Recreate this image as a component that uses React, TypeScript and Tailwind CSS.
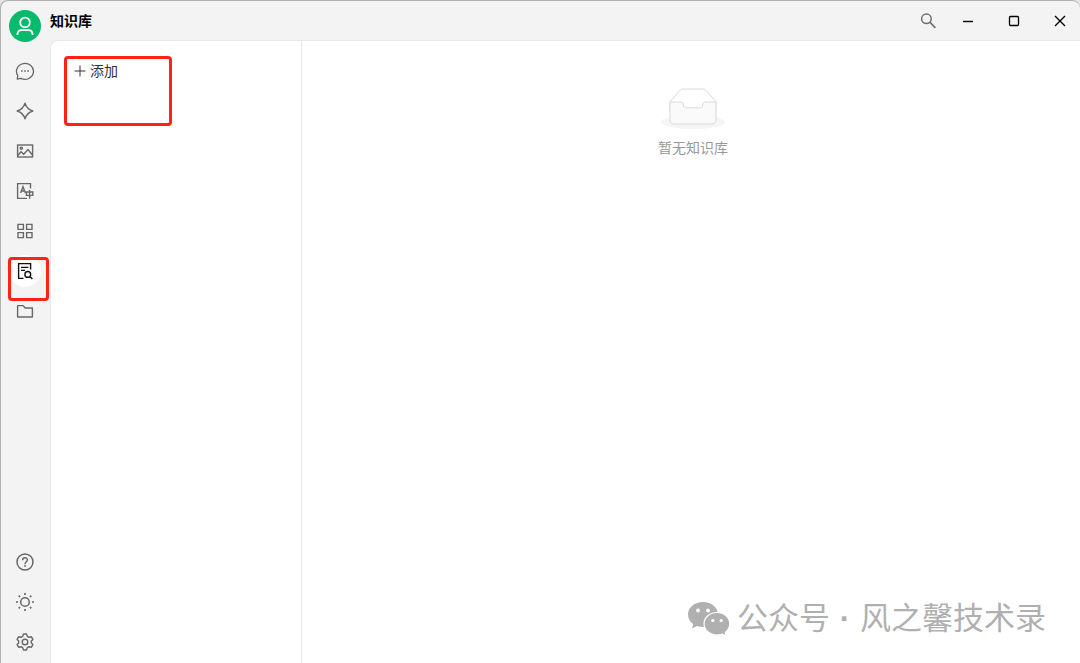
import type { ReactNode } from 'react';

type NavItem = { label: string; icon: ReactNode; active?: boolean };

const Glyph = ({ children }: { children: ReactNode }) => (
  <svg width="20" height="20" viewBox="0 0 20 20" fill="none" stroke="currentColor" strokeWidth="1.4" aria-hidden="true">
    {children}
  </svg>
);

const topItems: NavItem[] = [
  {
    label: '助手',
    icon: (
      <Glyph>
        <path d="M2.2 18 L2.8 14.6 A8.5 8 0 1 1 6 17.4 Z" strokeLinejoin="round" strokeWidth="1.3" />
        <path d="M6.1 10h1.6M9.2 10h1.6M12.3 10h1.6" strokeWidth="1.6" />
      </Glyph>
    ),
  },
  {
    label: '智能体',
    icon: (
      <Glyph>
        <path d="M10 2.2 C11.2 6 14 8.8 17.8 10 C14 11.2 11.2 14 10 17.8 C8.8 14 6 11.2 2.2 10 C6 8.8 8.8 6 10 2.2Z" strokeLinejoin="round" />
      </Glyph>
    ),
  },
  {
    label: '绘画',
    icon: (
      <Glyph>
        <rect x="2.6" y="4" width="15" height="12" />
        <circle cx="6.3" cy="7.3" r="1.1" />
        <path d="M2.8 14.5 L6 10.8 L8.7 13.2 L13 8.6 L17.4 14" />
      </Glyph>
    ),
  },
  {
    label: '翻译',
    icon: (
      <Glyph>
        <path d="M15.5 7.5 V2.6 H2.6 V17.4 H12" />
        <path d="M5.6 12 L8 5.8 L10.4 12 M6.6 10 H9.6" />
        <path d="M11.4 11 H17.8 V14.4 H11.4 Z M14.6 9 V17.8" />
      </Glyph>
    ),
  },
  {
    label: '小程序',
    icon: (
      <Glyph>
        <path d="M3 3.4h5.4v5H3zM11.6 3.4H17v5h-5.4zM3 11.6h5.4v5H3zM11.6 11.6H17v5h-5.4z" />
      </Glyph>
    ),
  },
  {
    label: '知识库',
    active: true,
    icon: (
      <Glyph>
        <path d="M8.5 17.4 H3.6 V2.6 H15.6 V8.5" />
        <path d="M6 6.4h7.4M6 9.4h4" />
        <circle cx="12.8" cy="13.4" r="2.9" />
        <path d="M14.9 15.5l2.5 2.5" />
      </Glyph>
    ),
  },
  {
    label: '文件',
    icon: (
      <Glyph>
        <path d="M2.6 4.6 H8.2 L10.2 7 H17.4 V16 H2.6 Z" strokeLinejoin="round" />
      </Glyph>
    ),
  },
];

const bottomItems: NavItem[] = [
  {
    label: '帮助',
    icon: (
      <Glyph>
        <circle cx="10" cy="10" r="8" strokeWidth="1.5" />
        <path d="M7.6 8.2 C7.6 5 12.4 5 12.4 8 C12.4 9.8 10 9.9 10 12.2" />
        <circle cx="10" cy="14" r="0.9" fill="currentColor" stroke="none" />
      </Glyph>
    ),
  },
  {
    label: '主题',
    icon: (
      <Glyph>
        <circle cx="10" cy="10" r="4.3" strokeWidth="1.5" />
        <path
          d="M10 1v2M10 17v2M1 10h2M17 10h2M3.7 3.7l1.3 1.3M15 15l1.3 1.3M16.3 3.7L15 5M5 15l-1.3 1.3"
          strokeWidth="1.7"
        />
      </Glyph>
    ),
  },
  {
    label: '设置',
    icon: (
      <Glyph>
        <path
          d="M8.5 2h3l.8 2.300 1.700 1 2.400-.5 1.500 2.600-1.600 1.600v2l1.600 1.600-1.500 2.600-2.400-.5-1.700 1-.8 2.300h-3l-.8-2.300-1.700-1-2.400.5-1.500-2.600L3.700 11V9L2.100 7.400l1.500-2.600 2.400.5 1.700-1z"
          strokeLinejoin="round"
        />
        <circle cx="10" cy="10" r="2.8" />
      </Glyph>
    ),
  },
];

const NavList = ({ items }: { items: NavItem[] }) => (
  <ul className="flex flex-col gap-2">
    {items.map((item) => (
      <li key={item.label} className="relative">
        <button
          type="button"
          aria-label={item.label}
          className={
            item.active
              ? 'flex size-8 items-center justify-center rounded-full bg-white text-[#111111]'
              : 'flex size-8 items-center justify-center rounded-full text-[#686868]'
          }
        >
          {item.icon}
        </button>
        {item.active && (
          <span className="pointer-events-none absolute top-0.5 -left-px h-11 w-[41px] rounded-sm border-3 border-[#ff2216]" />
        )}
      </li>
    ))}
  </ul>
);

const Sidebar = () => (
  <aside className="flex w-12 shrink-0 flex-col items-center pt-[9px] pb-[5px]">
    <button type="button" aria-label="用户" className="mb-[13px] flex size-8 items-center justify-center rounded-full bg-[#08ba6c] text-white">
      <svg width="20" height="20" viewBox="0 0 20 20" fill="none" stroke="currentColor" strokeWidth="1.8" aria-hidden="true">
        <circle cx="10" cy="6.4" r="4.8" />
        <path d="M2.4 19 C2.4 15.4 4 14.2 6.4 14.2 H13.6 C16 14.2 17.6 15.4 17.6 19" />
      </svg>
    </button>
    <nav className="flex flex-1 flex-col justify-between" aria-label="主导航">
      <NavList items={topItems} />
      <NavList items={bottomItems} />
    </nav>
  </aside>
);

const TitleBar = () => (
  <header className="flex h-[39px] shrink-0 items-center justify-between">
    <h1 className="text-sm font-bold text-black">知识库</h1>
    <div className="flex items-center">
      <button type="button" aria-label="搜索" className="flex h-8 w-10 items-center justify-center text-[#707070]">
        <svg width="16" height="16" viewBox="0 0 16 16" fill="none" stroke="currentColor" strokeWidth="1.5" aria-hidden="true">
          <circle cx="6.4" cy="5.8" r="4.8" />
          <path d="M9.8 9.2l5.600 5.600" strokeWidth="1.7" />
        </svg>
      </button>
      <div className="flex gap-1.5 text-black">
        <button type="button" aria-label="最小化" className="flex h-8 w-10 items-center justify-center">
          <svg width="12" height="12" viewBox="0 0 12 12" stroke="currentColor" strokeWidth="1.4" aria-hidden="true">
            <path d="M1 6.5h10" />
          </svg>
        </button>
        <button type="button" aria-label="最大化" className="flex h-8 w-10 items-center justify-center">
          <svg width="12" height="12" viewBox="0 0 12 12" fill="none" stroke="currentColor" strokeWidth="1.3" aria-hidden="true">
            <rect x="1.5" y="1.5" width="9" height="9" rx="1" />
          </svg>
        </button>
        <button type="button" aria-label="关闭" className="flex h-8 w-10 items-center justify-center">
          <svg width="12" height="12" viewBox="0 0 12 12" stroke="currentColor" strokeWidth="1.4" aria-hidden="true">
            <path d="M1 1l10 10M11 1L1 11" />
          </svg>
        </button>
      </div>
    </div>
  </header>
);

const EmptyState = () => (
  <div className="flex flex-col items-center gap-[9px]">
    <svg width="64" height="41" viewBox="0 0 64 41" aria-hidden="true">
      <g transform="translate(0 1)" fillRule="evenodd">
        <ellipse cx="32" cy="33" rx="32" ry="7" fill="#f5f5f5" />
        <g stroke="#d9d9d9">
          <path
            fill="#ffffff"
            d="M55 12.76L44.854 1.258C44.367.474 43.656 0 42.907 0H21.093c-.749 0-1.46.474-1.947 1.257L9 12.761V22h46v-9.24z"
          />
          <path
            fill="#fafafa"
            d="M41.613 15.931c0-1.605.994-2.93 2.227-2.931H55v18.137C55 33.26 53.68 35 52.05 35h-40.1C10.32 35 9 33.259 9 31.137V13h11.16c1.233 0 2.227 1.323 2.227 2.928v.022c0 1.605 1.005 2.901 2.237 2.901h14.752c1.232 0 2.237-1.308 2.237-2.913v-.007z"
          />
        </g>
      </g>
    </svg>
    <p className="text-sm text-[#999999]">暂无知识库</p>
  </div>
);

const Watermark = () => (
  <div className="pointer-events-none absolute right-[34px] bottom-6 flex items-center text-[#b0b0b0]">
    <svg width="44" height="36" viewBox="0 0 44 36" className="mr-1.5" aria-hidden="true">
      <path
        fill="currentColor"
        d="M16 1 C7.5 1 1 6.500 1 13.5 C1 17.5 3 20.8 6.3 23.2 L5 27.5 L10 25 C12 25.7 14 26 16.5 26 C24.5 26 31 20.5 31 13.5 C31 6.5 24.5 1 16 1Z"
      />
      <path
        fill="currentColor"
        stroke="#ffffff"
        strokeWidth="1.2"
        d="M30 11.5 C22.8 11.5 17 16.5 17 22.8 C17 29 22.8 34 30 34 C31.9 34 33.7 33.7 35.3 33 L39.3 35.3 L38.3 31.5 C41 29.4 42.8 26.3 42.8 22.8 C42.8 16.5 37.2 11.5 30 11.5Z"
      />
      <g fill="#ffffff">
        <circle cx="11" cy="9.5" r="1.9" />
        <circle cx="21" cy="9.5" r="1.9" />
        <circle cx="25.8" cy="19.5" r="1.6" />
        <circle cx="34.2" cy="19.5" r="1.6" />
      </g>
    </svg>
    <p className="flex text-[31px] leading-10">
      <span>公众号</span>
      <span className="w-7.5 text-center font-bold">·</span>
      <span>风之馨技术录</span>
    </p>
  </div>
);

export default function App() {
  return (
    <div className="bg-[#e4e4e4] font-['Liberation_Sans','Noto_Sans_CJK_SC',sans-serif]">
      <div className="relative flex min-h-screen rounded-t-lg border-t border-l border-[#b0b0b0] bg-[#f3f3f3]">
        <Sidebar />
        <div className="ml-px flex min-w-0 flex-1 flex-col">
          <TitleBar />
          <main className="flex flex-1 rounded-tl-lg border-t border-l border-[#e8e8e8] bg-white">
            <section className="w-[251px] shrink-0 border-r border-[#e8e8e8] px-[11px] pt-3.5" aria-label="知识库列表">
              <div className="relative px-3 py-1.5">
                <button type="button" className="flex h-5 items-center gap-1 text-sm text-[#333333]">
                  <svg width="12" height="12" viewBox="0 0 12 12" stroke="currentColor" aria-hidden="true">
                    <path d="M6 0.5v11M0.5 6h11" />
                  </svg>
                  添加
                </button>
                <span className="pointer-events-none absolute top-px left-0.5 h-17.5 w-27 rounded-sm border-3 border-[#ff2216]" />
              </div>
            </section>
            <section className="flex-1 pt-[47px] pl-1" aria-label="知识库内容">
              <EmptyState />
            </section>
          </main>
        </div>
        <Watermark />
      </div>
    </div>
  );
}
